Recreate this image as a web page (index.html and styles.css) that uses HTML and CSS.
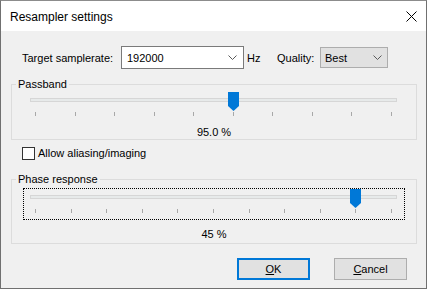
FILE: index.html
```html
<!DOCTYPE html>
<html lang="en">
<head>
    <meta charset="UTF-8">
    <title>Resampler settings</title>
    <link rel="stylesheet" href="styles.css">
</head>
<body>
    <div class="window">
        <div class="titlebar">
            <span class="title">Resampler settings</span>
            <svg class="close" width="11" height="11" viewBox="0 0 11 11">
                <path d="M0.5 0.5 L10.5 10.5 M10.5 0.5 L0.5 10.5" stroke="#000" stroke-width="1" fill="none"/>
            </svg>
        </div>

        <div class="client">
            <div class="rate-row">
                <label class="rate-label">Target samplerate:</label>
                <div class="combo edit">
                    <span>192000</span>
                    <svg class="chevron" width="9" height="5" viewBox="0 0 9 5">
                        <path d="M0.5 0.5 L4.5 4.5 L8.5 0.5" stroke="#5a5a5a" fill="none"/>
                    </svg>
                </div>
                <span class="unit">Hz</span>
                <label class="quality-label">Quality:</label>
                <div class="combo list">
                    <span>Best</span>
                    <svg class="chevron" width="9" height="5" viewBox="0 0 9 5">
                        <path d="M0.5 0.5 L4.5 4.5 L8.5 0.5" stroke="#5a5a5a" fill="none"/>
                    </svg>
                </div>
            </div>

            <fieldset class="group passband">
                <legend>Passband</legend>
                <div class="slider">
                    <div class="track"></div>
                    <svg class="thumb" style="left: 198px" width="11" height="19" viewBox="0 0 11 19">
                        <polygon points="0,0 11,0 11,14 5.5,19 0,14" fill="#0078d7"/>
                    </svg>
                    <div class="ticks">
                        <i></i><i></i><i></i><i></i><i></i><i></i><i></i><i></i><i></i><i></i>
                    </div>
                </div>
                <div class="value">95.0 %</div>
            </fieldset>

            <label class="check-row">
                <span class="checkbox"></span>
                Allow aliasing/imaging
            </label>

            <fieldset class="group phase">
                <legend>Phase response</legend>
                <div class="focus">
                    <div class="slider">
                        <div class="track"></div>
                        <svg class="thumb" style="left: 320px" width="11" height="19" viewBox="0 0 11 19">
                            <polygon points="0,0 11,0 11,14 5.5,19 0,14" fill="#0078d7"/>
                        </svg>
                        <div class="ticks">
                            <i></i><i></i><i></i><i></i><i></i><i></i><i></i><i></i><i></i><i></i><i></i>
                        </div>
                    </div>
                </div>
                <div class="value">45 %</div>
            </fieldset>

            <div class="buttons">
                <button class="btn default"><u>O</u>K</button>
                <button class="btn"><u>C</u>ancel</button>
            </div>
        </div>
    </div>
</body>
</html>
```

FILE: styles.css
```css
* {
    margin: 0;
    padding: 0;
    box-sizing: border-box;
    font-family: "Liberation Sans", Arial, sans-serif;
}

body {
    background-color: #ffffff;
    color: #000000;
    font-size: 11px;
}

.window {
    width: 427px;
    height: 289px;
    border: 1px solid #707070;
    border-top-color: #8c8c8c;
    display: flex;
    flex-direction: column;
}

/* Title bar */
.titlebar {
    height: 30px;
    background-color: #ffffff;
    display: flex;
    align-items: center;
    justify-content: space-between;
    padding: 0 9px 0 9px;
}

.title {
    font-size: 12px;
    line-height: 14px;
    margin-top: 1px;
}

.close {
    display: block;
    margin-top: 1px;
}

/* Client area */
.client {
    flex: 1;
    background-color: #f0f0f0;
    padding: 15px 9px 0 10px;
}

.rate-row {
    display: flex;
    align-items: center;
    height: 23px;
}

.rate-label {
    margin-left: 11px;
    width: 99px;
}

.combo {
    display: flex;
    align-items: center;
    justify-content: space-between;
}

.combo.edit {
    width: 123px;
    height: 23px;
    background-color: #ffffff;
    border: 1px solid #7a7a7a;
    padding: 0 6px 0 5px;
}

.combo.list {
    width: 68px;
    height: 21px;
    background-color: #e1e1e1;
    border: 1px solid #adadad;
    padding: 0 5px 0 4px;
}

.chevron {
    display: block;
}

.unit {
    margin-left: 3px;
    width: 30px;
}

.quality-label {
    width: 43px;
}

/* Group boxes */
.group {
    width: 406px;
    border: 1px solid #dcdcdc;
    margin-top: 8px;
    min-inline-size: 0;
}

.group legend {
    margin-left: 4px;
    padding: 0 2px;
    line-height: 14px;
}

.slider {
    position: relative;
    height: 24px;
    padding-top: 6px;
}

.passband .slider {
    margin: 1px 0 0 18px;
    width: 367px;
}

.track {
    height: 4px;
    background-color: #e7eaea;
    border: 1px solid #d6d6d6;
}

.thumb {
    position: absolute;
    top: 0;
    display: block;
}

.ticks {
    display: flex;
    justify-content: space-between;
    margin-top: 10px;
    padding: 0 5px 0 5px;
}

.ticks i {
    display: block;
    width: 1px;
    height: 4px;
    background-color: #a8a8a8;
}

.value {
    text-align: center;
    line-height: 14px;
    margin-top: 9px;
}

.phase {
    margin-top: 12px;
}

.focus {
    margin: 2px 11px 0 11px;
    border: 1px dotted #000000;
    padding: 0 7px 6px 6px;
}

.phase .value {
    margin-top: 7px;
    margin-bottom: 2px;
}

/* Checkbox */
.check-row {
    display: flex;
    align-items: center;
    gap: 3px;
    margin: 7px 0 0 11px;
    height: 13px;
    line-height: 13px;
}

.checkbox {
    width: 13px;
    height: 13px;
    background-color: #ffffff;
    border: 1px solid #333333;
}

/* Buttons */
.buttons {
    display: flex;
    justify-content: flex-end;
    gap: 24px;
    margin-top: 14px;
    padding-right: 10px;
}

.btn {
    width: 73px;
    height: 22px;
    background-color: #e1e1e1;
    border: 1px solid #adadad;
    font-size: 11px;
    color: #000000;
}

.btn.default {
    border: 2px solid #0078d7;
}
```
